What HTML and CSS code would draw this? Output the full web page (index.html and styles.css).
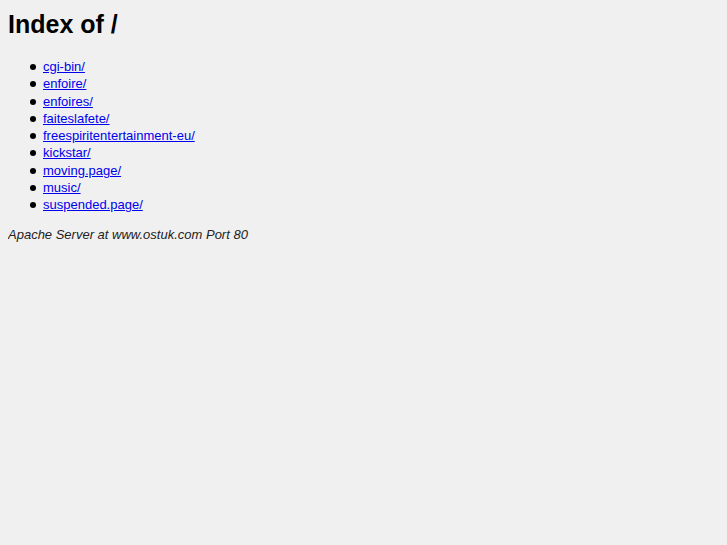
FILE: index.html
```html
<!DOCTYPE html>
<html>
<head>
<meta charset="utf-8">
<title>Index of /</title>
<link rel="stylesheet" href="styles.css">
</head>
<body>
<h1 class="title">Index of /</h1>
<ul class="listing">
<li><a href="#">cgi-bin/</a></li>
<li><a href="#">enfoire/</a></li>
<li><a href="#">enfoires/</a></li>
<li><a href="#">faiteslafete/</a></li>
<li><a href="#">freespiritentertainment-eu/</a></li>
<li><a href="#">kickstar/</a></li>
<li><a href="#">moving.page/</a></li>
<li><a href="#">music/</a></li>
<li><a href="#">suspended.page/</a></li>
</ul>
<address class="footer">Apache Server at www.ostuk.com Port 80</address>
</body>
</html>
```
FILE: styles.css
```css
html { background: #f0f0f0; }
body {
  margin: 8px;
  font-family: "Liberation Sans", Arial, sans-serif;
  font-size: 13px;
  line-height: 17.3px;
  color: #000;
}
.title {
  font-size: 25px;
  line-height: 28px;
  font-weight: bold;
  margin: 2px 0 20px;
}
.listing {
  margin: 0 0 12px;
  padding-left: 35px;
  list-style: none;
}
.listing li::before {
  content: "";
  display: inline-block;
  width: 6px;
  height: 6px;
  border-radius: 50%;
  background: #000;
  margin-left: -13px;
  margin-right: 7px;
  vertical-align: 1px;
}
.listing a { color: #0000ee; }
.footer {
  font-style: italic;
  color: #222;
}
```
